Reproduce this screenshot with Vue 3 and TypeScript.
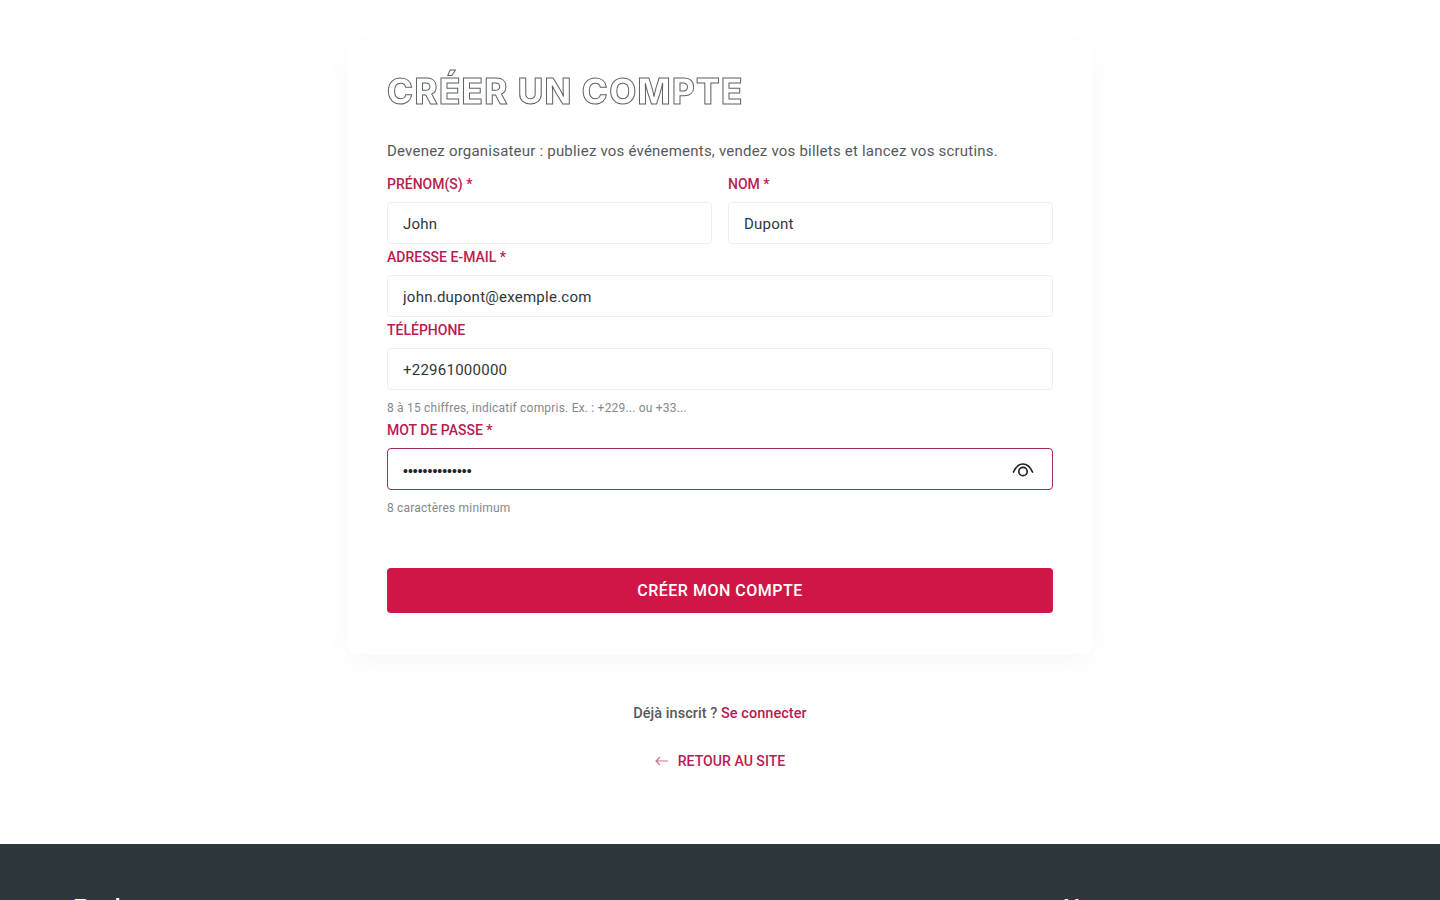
<script setup lang="ts">
import { ref } from 'vue'
const first = ref('John')
const last = ref('Dupont')
const email = ref('john.dupont@exemple.com')
const phone = ref('+22961000000')
const password = ref('••••••••••••••')
</script>

<template>
  <div class="page">
    <main class="main">
      <section class="card">
        <h1 class="title">CRÉER UN COMPTE</h1>
        <p class="intro">Devenez organisateur : publiez vos événements, vendez vos billets et lancez vos scrutins.</p>
        <form class="form" @submit.prevent>
          <div class="row">
            <div class="field">
              <label class="label">PRÉNOM(S) *</label>
              <input class="input" v-model="first" />
            </div>
            <div class="field">
              <label class="label">NOM *</label>
              <input class="input" v-model="last" />
            </div>
          </div>
          <div class="field">
            <label class="label">ADRESSE E-MAIL *</label>
            <input class="input" v-model="email" />
          </div>
          <div class="field">
            <label class="label">TÉLÉPHONE</label>
            <input class="input" v-model="phone" />
            <small class="hint">8 à 15 chiffres, indicatif compris. Ex. : +229... ou +33...</small>
          </div>
          <div class="field">
            <label class="label">MOT DE PASSE *</label>
            <div class="input focus">
              <span class="dots">{{ password }}</span>
              <svg class="eye" viewBox="0 0 24 24" width="24" height="24" fill="none" stroke="#1f2428" stroke-width="1.7" stroke-linecap="round">
                <path d="M2.5 14C5 8.5 8.2 6 12 6s7 2.5 9.5 8" />
                <circle cx="12" cy="13.5" r="4.2" />
              </svg>
            </div>
            <small class="hint">8 caractères minimum</small>
          </div>
          <button class="submit" type="submit">CRÉER MON COMPTE</button>
        </form>
      </section>
      <p class="login">Déjà inscrit ? <a class="link" href="#">Se connecter</a></p>
      <a class="back" href="#">
        <svg viewBox="0 0 14 10" width="14" height="10" fill="none" stroke="#c9708a" stroke-width="1.1">
          <path d="M13 5H1M5 1 1 5l4 4" />
        </svg>
        <span>RETOUR AU SITE</span>
      </a>
    </main>
    <footer class="footer">
      <h3 class="foot-title">Explorer</h3>
      <h3 class="foot-title">Nous contacter</h3>
    </footer>
  </div>
</template>

<style>
html, body { margin: 0; background: #fff; overflow: hidden; }
</style>

<style scoped>
.page {
  height: 900px;
  overflow: hidden;
  font-family: "Roboto", "Liberation Sans", sans-serif;
  color: #4f5357;
}
.main {
  height: 844px;
  box-sizing: border-box;
  padding-top: 41px;
  display: flex;
  flex-direction: column;
  align-items: center;
}
.card {
  width: 744px;
  height: 613px;
  box-sizing: border-box;
  padding: 25px 39px 0;
  background: #fff;
  border-radius: 8px;
  box-shadow: 0 10px 30px rgba(0, 0, 0, 0.03);
}
.title {
  margin: 0;
  height: 51px;
  font-family: "Inter", "Liberation Sans", sans-serif;
  font-weight: 800;
  font-size: 35px;
  line-height: 51px;
  letter-spacing: 1.35px;
  color: #fff;
  -webkit-text-stroke: 1px #5d6468;
  white-space: nowrap;
  will-change: opacity;
}
.intro {
  margin: 23px 0 0;
  font-size: 15px;
  line-height: 22px;
  letter-spacing: 0.21px;
  color: #55595d;
  white-space: nowrap;
}
.form {
  display: flex;
  flex-direction: column;
  margin-top: 11px;
}
.row {
  display: grid;
  grid-template-columns: 325px 325px;
  gap: 16px;
}
.field {
  display: flex;
  flex-direction: column;
  min-width: 0;
}
.label {
  height: 21px;
  font-size: 14px;
  line-height: 23px;
  font-weight: 500;
  color: #b91c50;
  white-space: nowrap;
}
.input {
  box-sizing: border-box;
  width: 100%;
  height: 42px;
  margin: 8px 0 2px;
  padding: 1px 15px 0;
  border: 1px solid #eceeef;
  border-radius: 4px;
  background: #fff;
  font-family: inherit;
  font-size: 15px;
  letter-spacing: 0.25px;
  color: #30363a;
  outline: none;
}
.focus {
  display: flex;
  align-items: center;
  justify-content: space-between;
  border-color: #a02a66;
  padding-right: 17px;
}
.dots {
  font-family: "Liberation Sans", sans-serif;
  font-size: 14px;
  letter-spacing: 0;
  color: #1f2428;
  padding-top: 3px;
}
.hint {
  height: 21px;
  margin-top: 6px;
  font-size: 12px;
  line-height: 20px;
  letter-spacing: 0.2px;
  color: #85898c;
  white-space: nowrap;
}
.submit {
  height: 45px;
  margin-top: 49px;
  border: none;
  border-radius: 4px;
  background: #cf1647;
  color: #fff;
  font-family: inherit;
  font-size: 16px;
  font-weight: 500;
  letter-spacing: 0.5px;
}
.login {
  margin: 49px 0 0;
  font-size: 14.5px;
  line-height: 22px;
  letter-spacing: 0.05px;
  font-weight: 500;
  color: #55595d;
}
.link {
  color: #b91c50;
  text-decoration: none;
}
.back {
  display: flex;
  align-items: center;
  gap: 9px;
  margin-top: 25px;
  height: 22px;
  font-size: 14.1px;
  font-weight: 500;
  color: #b91c50;
  text-decoration: none;
}
.footer {
  height: 56px;
  box-sizing: border-box;
  background: #2d383c;
  padding: 50px 0 0 73px;
  display: flex;
}
.foot-title {
  margin: 0;
  font-size: 24px;
  line-height: 28px;
  font-weight: 500;
  letter-spacing: 0.8px;
  color: #fff;
  white-space: nowrap;
}
.foot-title:first-child { width: 990px; }
</style>
